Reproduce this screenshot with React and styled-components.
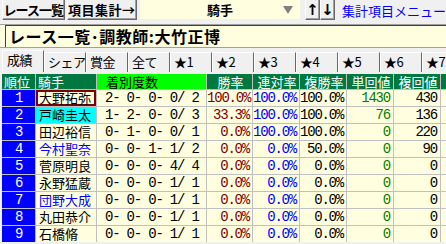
import React from 'react'
import styled, { createGlobalStyle, css } from 'styled-components'

const GlobalStyle = createGlobalStyle`
    html, body {
        margin: 0;
        padding: 0;
        background: #f0f0f0;
        overflow: hidden;
    }
    body {
        font-family: "Noto Sans CJK JP", sans-serif;
    }
`

const rows = [
    { rank: 1, name: '大野拓弥', counts: '2- 0- 0- 0/ 2', win: '100.0%', ren: '100.0%', fuku: '100.0%', tan: '1430', fkv: '430', selected: true },
    { rank: 2, name: '戸崎圭太', counts: '1- 2- 0- 0/ 3', win: '33.3%', ren: '100.0%', fuku: '100.0%', tan: '76', fkv: '136', highlight: true },
    { rank: 3, name: '田辺裕信', counts: '0- 1- 0- 0/ 1', win: '0.0%', ren: '100.0%', fuku: '100.0%', tan: '0', fkv: '220' },
    { rank: 4, name: '今村聖奈', counts: '0- 0- 1- 1/ 2', win: '0.0%', ren: '0.0%', fuku: '50.0%', tan: '0', fkv: '90', blue: true },
    { rank: 5, name: '菅原明良', counts: '0- 0- 0- 4/ 4', win: '0.0%', ren: '0.0%', fuku: '0.0%', tan: '0', fkv: '0' },
    { rank: 6, name: '永野猛蔵', counts: '0- 0- 0- 1/ 1', win: '0.0%', ren: '0.0%', fuku: '0.0%', tan: '0', fkv: '0' },
    { rank: 7, name: '団野大成', counts: '0- 0- 0- 1/ 1', win: '0.0%', ren: '0.0%', fuku: '0.0%', tan: '0', fkv: '0', blue: true },
    { rank: 8, name: '丸田恭介', counts: '0- 0- 0- 1/ 1', win: '0.0%', ren: '0.0%', fuku: '0.0%', tan: '0', fkv: '0' },
    { rank: 9, name: '石橋脩', counts: '0- 0- 0- 1/ 1', win: '0.0%', ren: '0.0%', fuku: '0.0%', tan: '0', fkv: '0' },
]

const tabs = ['成績', 'シェア', '賞金', '全て', '★1', '★2', '★3', '★4', '★5', '★6', '★7']

export default function App() {
    return (
        <Page>
            <GlobalStyle />
            <Toolbar>
                <ToolButton $w={72} $tight>レース一覧</ToolButton>
                <ToolButton $w={81}>項目集計→</ToolButton>
                <Select>
                    <span>騎手</span>
                    <Caret viewBox="0 0 10 8">
                        <polygon points="0,0 10,0 5,8" fill="#808080" />
                    </Caret>
                </Select>
                <ArrowGroup>
                    <ArrowButton>↑</ArrowButton>
                    <ArrowButton>↓</ArrowButton>
                </ArrowGroup>
                <LinkText>集計項目メニュー</LinkText>
            </Toolbar>

            <TitleBar>
                <TitleText>レース一覧･調教師:大竹正博</TitleText>
            </TitleBar>

            <TabStrip>
                {tabs.map((t, i) => (
                    <Tab key={t} $active={i === 0}>{t}</Tab>
                ))}
            </TabStrip>

            <Table>
                <Head>順位</Head>
                <Head>騎手</Head>
                <Head $lime>着別度数</Head>
                <Head $center>勝率</Head>
                <Head $center>連対率</Head>
                <Head $center>複勝率</Head>
                <Head $center>単回値</Head>
                <Head $center>複回値</Head>
                <Head />
                {rows.map(r => (
                    <React.Fragment key={r.rank}>
                        <Rank>{r.rank}</Rank>
                        <Name $selected={r.selected} $highlight={r.highlight} $blue={r.blue}>{r.name}</Name>
                        <Counts>{r.counts}</Counts>
                        <Num $color="#800000">{r.win}</Num>
                        <Num $color="#0000ff">{r.ren}</Num>
                        <Num>{r.fuku}</Num>
                        <Num $color="#008000">{r.tan}</Num>
                        <Num>{r.fkv}</Num>
                        <Num />
                    </React.Fragment>
                ))}
            </Table>
        </Page>
    )
}

const Page = styled.div`
    width: 446px;
    height: 244px;
    overflow: hidden;
    background: #f0f0f0;
`

const raised = css`
    box-sizing: border-box;
    background: #f0f0f0;
    border: 1px solid;
    border-color: #ffffff #696969 #696969 #ffffff;
    box-shadow: inset -1px -1px #a0a0a0;
`

const Toolbar = styled.div`
    display: flex;
    align-items: flex-start;
    height: 24px;
    padding-left: 2px;
    box-sizing: border-box;
    white-space: nowrap;
`

const ToolButton = styled.div`
    ${raised}
    border-top: none;
    width: ${p => p.$w}px;
    height: 20px;
    margin-right: 2px;
    display: flex;
    align-items: center;
    justify-content: center;
    font-size: 13px;
    font-weight: 700;
    letter-spacing: ${p => (p.$tight ? '-1px' : '0.5px')};
    color: #000;
    overflow: hidden;
`

const Select = styled.div`
    position: relative;
    width: 185px;
    height: 19px;
    margin-left: 1px;
    background: #ffffe0;
    display: flex;
    align-items: center;
    justify-content: center;
    font-size: 13px;
    font-weight: 700;
`

const Caret = styled.svg`
    position: absolute;
    right: 7px;
    top: 6px;
    width: 10px;
    height: 8px;
`

const ArrowGroup = styled.div`
    display: flex;
    margin-left: 5px;
`

const ArrowButton = styled.div`
    ${raised}
    border-top: none;
    width: 15px;
    height: 20px;
    display: flex;
    align-items: center;
    justify-content: center;
    font-size: 15px;
    font-weight: 700;
    font-family: "DejaVu Sans", sans-serif;
`

const LinkText = styled.div`
    margin-left: 7px;
    margin-top: 2px;
    font-size: 13px;
    line-height: 17px;
    color: #0000ff;
`

const TitleBar = styled.div`
    height: 22px;
    border-top: 1px solid #a0a0a0;
    border-bottom: 1px solid #a0a0a0;
    background: #ffffe0;
    display: flex;
`

const TitleText = styled.div`
    flex: 1;
    margin-left: 5px;
    padding-left: 3px;
    border-top: 1px solid #404040;
    border-left: 1px solid #404040;
    font-size: 16px;
    font-weight: 700;
    line-height: 21px;
    letter-spacing: 0.5px;
    white-space: nowrap;
`

const TabStrip = styled.div`
    display: flex;
    align-items: flex-end;
    height: 22px;
    margin-top: 2px;
    padding-left: 2px;
    white-space: nowrap;
`

const Tab = styled.div`
    box-sizing: border-box;
    flex: 0 0 42px;
    height: ${p => (p.$active ? '22px' : '20px')};
    padding-left: ${p => (p.$active ? '4px' : '3px')};
    border: 1px solid;
    border-bottom: none;
    border-color: #ffffff #696969 transparent #ffffff;
    background: #f0f0f0;
    font-size: 13px;
    line-height: 18px;
    letter-spacing: -0.5px;
    overflow: hidden;
`

const Table = styled.div`
    display: grid;
    grid-template-columns: 33px 60px 109px 45px 46px 46px 46px 46px 46px;
    grid-template-rows: 15px repeat(9, 16px);
    gap: 1px;
    margin: 2px 0 0 2px;
    background: #c0c0c0;
    width: max-content;
`

const Head = styled.div`
    background: ${p => (p.$lime ? '#00ff00' : '#007840')};
    color: ${p => (p.$lime ? '#000' : '#fff')};
    font-size: 13px;
    line-height: 15px;
    padding-left: ${p => (p.$lime ? '9px' : '2px')};
    text-align: ${p => (p.$center ? 'center' : 'left')};
    white-space: nowrap;
    overflow: hidden;
`

const mono = css`
    font-family: "Liberation Mono", monospace;
    font-size: 14px;
    letter-spacing: -1.2px;
    line-height: 16px;
    white-space: pre;
`

const Rank = styled.div`
    ${mono}
    background: #0000ff;
    color: #fff;
    text-align: center;
`

const Name = styled.div`
    background: ${p => (p.$highlight ? '#00ffff' : '#ffffe0')};
    color: ${p => (p.$blue ? '#0000ff' : '#000')};
    box-shadow: ${p => (p.$selected ? 'inset 0 0 0 2px #800000' : 'none')};
    font-size: 13px;
    line-height: 16px;
    padding-left: 3px;
    white-space: nowrap;
    overflow: hidden;
`

const Counts = styled.div`
    ${mono}
    background: #ffffe0;
    padding-left: 8px;
`

const Num = styled.div`
    ${mono}
    background: #ffffe0;
    color: ${p => p.$color || '#000'};
    text-align: right;
    padding-right: 3px;
    overflow: hidden;
`
